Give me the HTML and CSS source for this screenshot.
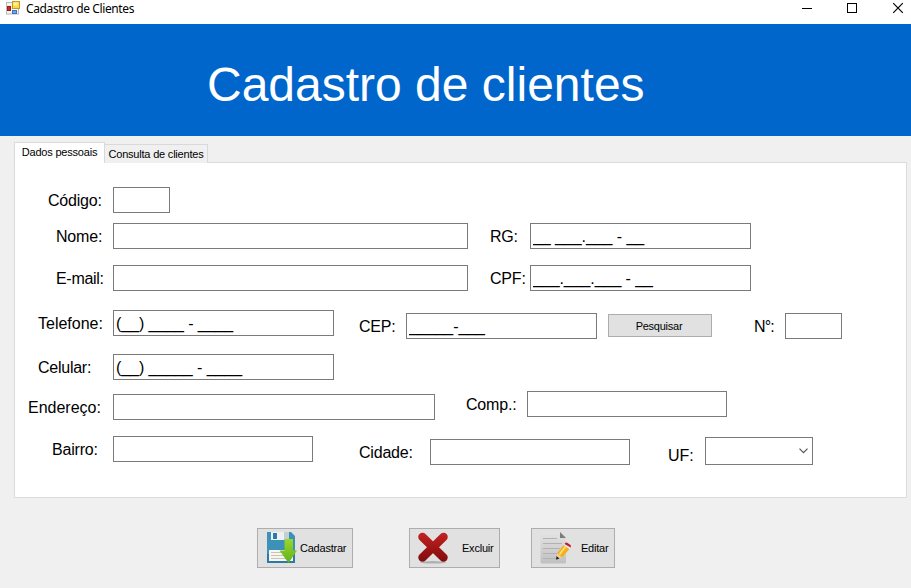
FILE: index.html
```html
<!DOCTYPE html>
<html lang="pt-BR">
<head>
<meta charset="utf-8">
<title>Cadastro de Clientes</title>
<link rel="stylesheet" href="styles.css">
</head>
<body>
<div class="window">
  <header class="titlebar">
    <svg class="app-icon" width="14" height="14" viewBox="0 0 14 14">
      <rect x="0.5" y="1.5" width="12" height="11.5" fill="#f4f4f4" stroke="#b9b9b9"/>
      <rect x="1.5" y="5.5" width="3" height="4" fill="#d8261c" stroke="#9d1c14"/>
      <rect x="6.500" y="0.500" width="7" height="7" fill="#f9d94c" stroke="#c99a1c"/>
      <rect x="7.500" y="1.500" width="4" height="3" fill="#fff0a0"/>
      <rect x="6.500" y="9.500" width="4" height="3" fill="#6fa4ee" stroke="#3c72c8"/>
    </svg>
    <span class="app-title">Cadastro de Clientes</span>
    <svg class="controls" width="100" height="16" viewBox="0 0 100 16" fill="none" stroke="#000">
      <path d="M0 8.500h10"/>
      <rect x="45.500" y="3.500" width="9" height="9"/>
      <path d="M91.200 3.200l9.600 9.600m0-9.600l-9.600 9.600" stroke-width="1.200"/>
    </svg>
  </header>
  <div class="banner"><h1>Cadastro de clientes</h1></div>
  <main class="content">
    <nav class="tabs">
      <button class="tab active">Dados pessoais</button>
      <button class="tab">Consulta de clientes</button>
    </nav>
    <section class="panel">
      <div class="row r1"><label class="codigo">Código:</label><input class="w57"></div>
      <div class="row r2"><label class="nome">Nome:</label><input class="w355"><label class="rg">RG:</label><input class="w221" value="__ ___.___ - __"></div>
      <div class="row r3"><label class="email">E-mail:</label><input class="w355"><label class="rg">CPF:</label><input class="w221" value="___.___.___ - __"></div>
      <div class="row r4"><label class="tel">Telefone:</label><input class="w221" value="(__) ____ - ____">
        <div class="sub"><label class="cep">CEP:</label><input class="w191" value="_____-___"><button class="search">Pesquisar</button><label class="num">N°:</label><input class="w57"></div></div>
      <div class="row r5"><label class="tel tight">Celular:</label><input class="w221" value="(__) _____ - ____"></div>
      <div class="row r6"><label class="end">Endereço:</label><input class="w322"><div class="sub up"><label class="comp">Comp.:</label><input class="w200"></div></div>
      <div class="row r7"><label class="bairro">Bairro:</label><input class="w200">
        <div class="sub"><label class="cidade">Cidade:</label><input class="w200"><label class="uf">UF:</label>
          <div class="combo"><svg width="9" height="6" viewBox="0 0 9 6" fill="none" stroke="#555" stroke-width="1.200"><path d="M.5.7l4 4 4-4"/></svg></div></div></div>
    </section>
    <footer class="actions">
      <button class="action save">
        <svg width="31" height="32" viewBox="0 0 31 32">
          <defs><linearGradient id="arrow" x2="0" y2="1"><stop stop-color="#98d82b"/><stop offset="1" stop-color="#62b01c"/></linearGradient></defs>
          <path d="M1 0h24l4 4v26a1 1 0 0 1-1 1H2a1 1 0 0 1-1-1z" fill="#3b91b8"/>
          <path d="M1 22h28v8q0 1-1 1H2q-1 0-1-1z" fill="#2a7ba3"/>
          <path d="M5 0h18v8H5z" fill="#eef1f2"/><path d="M7 1h4v6H7z" fill="#297ca5"/><path d="M18 0h5v8h-5z" fill="#c3cfd5"/>
          <path d="M3 18h24v11H3z" fill="#f8f6f0"/><path d="M5 20.500h18M5 23.500h18M5 26.500h18" stroke="#c9c3b3"/>
          <path d="M18.500 7h8.500v11.500h4L22.500 31 13.500 18.500h5z" fill="url(#arrow)"/>
        </svg><span>Cadastrar</span></button>
      <button class="action del">
        <svg width="32" height="32" viewBox="0 0 32 32">
          <defs><linearGradient id="cross" gradientUnits="userSpaceOnUse" x1="0" y1="0" x2="0" y2="30"><stop stop-color="#c62323"/><stop offset=".5" stop-color="#a31616"/><stop offset="1" stop-color="#7f0d0d"/></linearGradient></defs>
          <ellipse cx="16" cy="30.300" rx="13" ry="1.200" fill="#b0b0b0"/>
          <path d="M5.500 5L26.500 25.500M26.500 5L5.500 25.500" stroke="url(#cross)" stroke-width="8.500" stroke-linecap="round"/>
        </svg><span>Excluir</span></button>
      <button class="action edit">
        <svg width="32" height="34" viewBox="0 0 32 34">
          <defs><linearGradient id="paper" x2="0" y2="1"><stop stop-color="#e4e4e4"/><stop offset="1" stop-color="#c0c0c0"/></linearGradient></defs>
          <path d="M2 1h18l6 6v24q0 1.500-1.500 1.500H2Q.5 32.500.5 31V2.500Q.5 1 2 1z" fill="url(#paper)"/>
          <path d="M20 1l6 6h-6z" fill="#7c7c7c"/>
          <path d="M3 7.500h14M3 12.500h19M3 17.500h17M3 22.500h14M3 27.500h13" stroke="#b2b2b2"/>
          <path d="M17 22.500L23.500 14l6 4L22 26.500z" fill="#f2b01f"/><path d="M19.500 23.500l6-8" stroke="#ffdc71" stroke-width="1.800"/>
          <path d="M23.500 14l1.200-1.500 6 4-1.200 1.500z" fill="#e9e9e9"/><path d="M24.500 13q1-2.200 2.700-1.300l3 2q1.300 1.200.5 2.800z" fill="#c21d28"/>
          <path d="M17 22.500l5 4-6 2z" fill="#efd0a0"/><path d="M16.500 25l3 2.400-3.500 1.300z" fill="#222"/>
        </svg><span>Editar</span></button>
    </footer>
  </main>
</div>
</body>
</html>
```
FILE: styles.css
```css
* { box-sizing: border-box; }
body { margin: 0; font-family: "Liberation Sans", Arial, sans-serif; color: #000; }
.window { width: 911px; height: 588px; background: #f0f0f0; overflow: hidden; }
.titlebar { height: 24px; background: #fff; display: flex; align-items: flex-start; padding-left: 6px; }
.app-icon { margin-top: 1px; }
.app-title { margin-left: 6px; font: 12px/18px "Noto Sans", sans-serif; letter-spacing: -.38px; white-space: nowrap; }
.controls { margin-left: auto; margin-right: 9px; flex: none; overflow: visible; }
.banner { height: 112px; background: #0066cc; padding: 33px 0 0 207px; }
h1 { margin: 0; font-size: 48px; font-weight: 400; line-height: 55px; color: #fff; white-space: nowrap; }
.content { padding: 6px 4px 0 14px; }
button { font-family: inherit; font-size: 11px; color: #000; padding: 0; border-radius: 0; white-space: nowrap; }
.tabs { display: flex; align-items: flex-end; height: 21px; margin-bottom: -1px; }
.tab { height: 19px; width: 103px; border: 1px solid #d9d9d9; border-left: 0; border-bottom: 0; background: #f0f0f0; letter-spacing: -.2px; line-height: 17px; padding-top: 1px; }
.tab.active { height: 21px; width: 91px; border-left: 1px solid #d9d9d9; background: #fff; position: relative; line-height: 18px; padding: 0 0 2px; }
.panel { width: 893px; height: 336px; background: #fff; border: 1px solid #dcdcdc; padding-top: 24px; }
.row, .sub { display: flex; align-items: flex-start; height: 26px; }
.sub { margin-top: 3px; }
.sub.up { margin-top: -3px; }
.r2 { margin-top: 10px; }
.r3 { margin-top: 16px; }
.r4 { margin-top: 19px; }
.r5 { margin-top: 18px; }
.r6 { margin-top: 14px; }
.r7 { margin-top: 16px; }
label { flex: none; font-size: 16px; line-height: 27px; letter-spacing: -.2px; white-space: nowrap; }
input { flex: none; height: 26px; margin: 0; border: 1px solid #7a7a7a; border-radius: 0; background: #fff; padding: 2px 2px 0; font: 16px/22px "Liberation Sans", Arial, sans-serif; letter-spacing: -.07px; color: #000; }
.w57 { width: 57px; }
.w191 { width: 191px; }
.w200 { width: 200px; }
.w221 { width: 221px; }
.w322 { width: 322px; }
.w355 { width: 355px; }
.codigo { margin-left: 33px; width: 65px; }
.nome, .email { margin-left: 41px; width: 57px; }
.email { letter-spacing: -.3px; }
.tel { margin-left: 23px; width: 75px; letter-spacing: 0; }
.tight { letter-spacing: -.25px; }
.end { margin-left: 13px; width: 85px; letter-spacing: 0; }
.bairro { margin-left: 37px; width: 61px; }
.rg { margin-left: 22px; width: 40px; }
.cep { margin-left: 25px; width: 47px; }
.num { margin-left: 42px; width: 31px; letter-spacing: -.9px; }
.comp { margin-left: 31px; width: 61px; }
.cidade { margin-left: 46px; width: 71px; }
.uf { margin-left: 38px; width: 37px; padding-top: 3px; letter-spacing: 0; }
.search { width: 104px; height: 23px; margin: 1px 0 0 11px; border: 1px solid #adadad; background: #e1e1e1; letter-spacing: -.25px; padding-right: 2px; }
.combo { width: 108px; height: 28px; margin-top: -2px; border: 1px solid #7a7a7a; display: flex; align-items: center; justify-content: flex-end; padding-right: 4px; }
.actions { display: flex; margin: 30px 0 0 243px; }
.action { height: 40px; border: 1px solid #adadad; background: #e1e1e1; display: flex; align-items: center; letter-spacing: -.22px; }
.save { width: 96px; padding-left: 8px; }
.save span { margin-left: 3px; }
.del { width: 91px; margin-left: 56px; padding-left: 7px; }
.del span { margin-left: 13px; }
.edit { width: 84px; margin-left: 31px; padding-left: 8px; }
.edit span { margin-left: 9px; }
```
